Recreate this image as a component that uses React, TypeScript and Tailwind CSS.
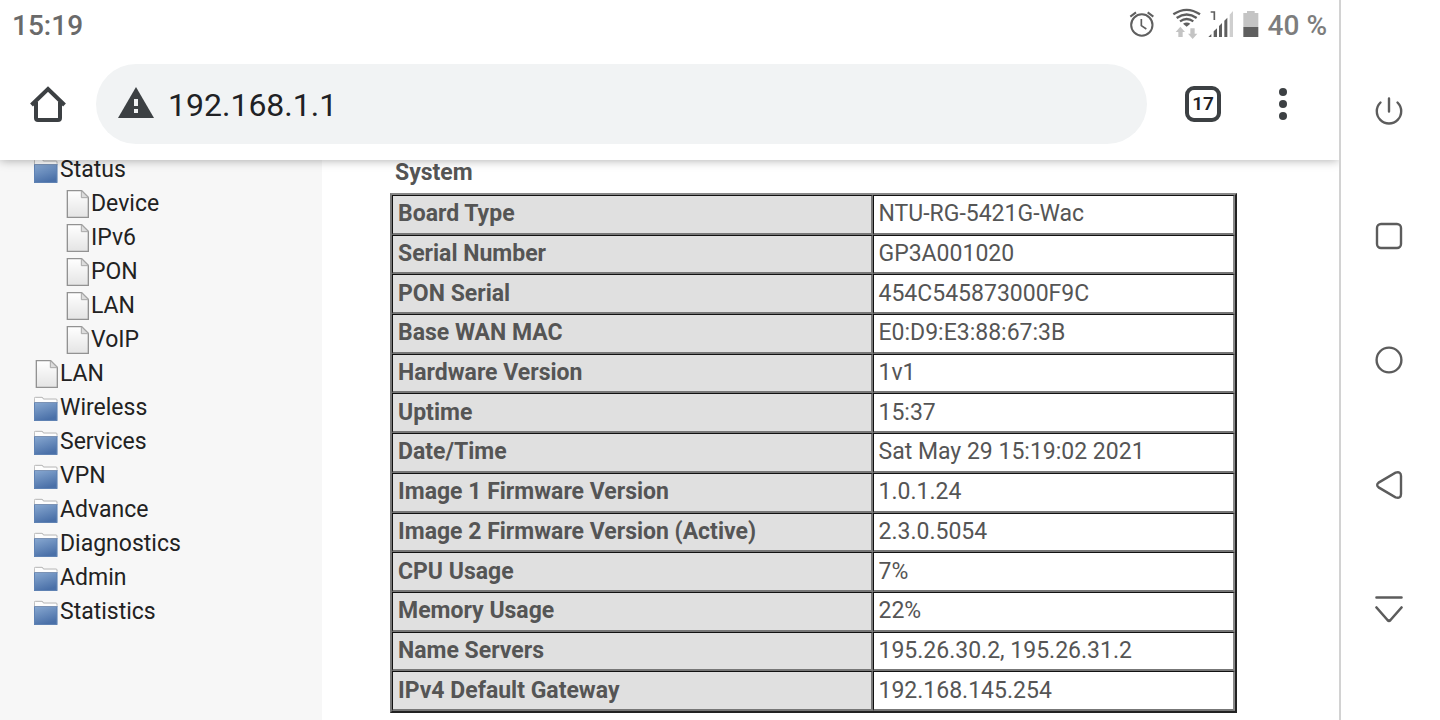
import {ReactNode} from 'react';

interface MenuItem {
    label: string;
    icon: "folder" | "page";
    children?: MenuItem[];
}

interface IconButtonProps {
    label: string;
    className?: string;
    children: ReactNode;
}

const menu: MenuItem[] = [
    {
        label: "Status",
        icon: "folder",
        children: [
            {label: "Device", icon: "page"},
            {label: "IPv6", icon: "page"},
            {label: "PON", icon: "page"},
            {label: "LAN", icon: "page"},
            {label: "VoIP", icon: "page"},
        ],
    },
    {label: "LAN", icon: "page"},
    {label: "Wireless", icon: "folder"},
    {label: "Services", icon: "folder"},
    {label: "VPN", icon: "folder"},
    {label: "Advance", icon: "folder"},
    {label: "Diagnostics", icon: "folder"},
    {label: "Admin", icon: "folder"},
    {label: "Statistics", icon: "folder"},
];

const systemInfo = [
    ["Board Type", "NTU-RG-5421G-Wac"],
    ["Serial Number", "GP3A001020"],
    ["PON Serial", "454C545873000F9C"],
    ["Base WAN MAC", "E0:D9:E3:88:67:3B"],
    ["Hardware Version", "1v1"],
    ["Uptime", "15:37"],
    ["Date/Time", "Sat May 29 15:19:02 2021"],
    ["Image 1 Firmware Version", "1.0.1.24"],
    ["Image 2 Firmware Version (Active)", "2.3.0.5054"],
    ["CPU Usage", "7%"],
    ["Memory Usage", "22%"],
    ["Name Servers", "195.26.30.2, 195.26.31.2"],
    ["IPv4 Default Gateway", "192.168.145.254"],
];

const FolderIcon = () => (
    <svg className="h-7 w-6 shrink-0" viewBox="42 222 72 84" aria-hidden="true">
        <defs>
            <linearGradient id="folder" x1="0" y1="0" x2="0.4" y2="1">
                <stop offset="0" stopColor="#8aaad2"/>
                <stop offset="1" stopColor="#4a70a8"/>
            </linearGradient>
        </defs>
        <path d="M43 248V235q0-3 3-3h20q3 0 4 4h38q3 0 3 3v9z" fill="#fdfdfd"/>
        <path d="M43 247V235q0-3 3-3h20q3 0 4 5h38q3 0 3 3v5" fill="none" stroke="#b4b4b4" strokeWidth="3"/>
        <rect x="42" y="246" width="70" height="57" fill="url(#folder)"/>
        <path d="M43.500 246v55.500h67V246" fill="none" stroke="#5f82b3" strokeWidth="3"/>
        <path d="M42 247.500h70" stroke="#7b92b4" strokeWidth="3"/>
    </svg>
);

const PageIcon = () => (
    <svg className="h-7 w-6 shrink-0" viewBox="41 118 72 84" aria-hidden="true">
        <defs>
            <linearGradient id="page" x1="0" y1="0" x2="0" y2="1">
                <stop offset="0" stopColor="#ffffff"/>
                <stop offset="1" stopColor="#e4e4e4"/>
            </linearGradient>
        </defs>
        <path d="M48 120h43l20 20v60H48z" fill="url(#page)" stroke="#929292" strokeWidth="4"/>
        <path d="M90 120v21h21z" fill="#dcdcdc" stroke="#a8a8a8" strokeWidth="3"/>
    </svg>
);

const AlarmIcon = () => (
    <svg className="h-8 w-[26px]" viewBox="56 24 78 96" fill="none" stroke="#5f5f5f" aria-hidden="true">
        <circle cx="94.500" cy="75" r="32" strokeWidth="6"/>
        <path d="M93 57v20l15 10" strokeWidth="5"/>
        <path d="M60 50l17-13M112 37l17 13" strokeWidth="6"/>
    </svg>
);

const WifiIcon = () => (
    <svg className="h-8 w-[29px]" viewBox="183 24 87 96" aria-hidden="true">
        <g fill="none" stroke="#5f5f5f" strokeWidth="7">
            <path d="M187 43q40-27 80 0"/>
            <path d="M197 54q30-21 60 0"/>
            <path d="M207 64q20-14 40 0"/>
        </g>
        <path d="M216 71q11-7 22 0l-11 9z" fill="#5f5f5f"/>
        <path d="M208 80l14 16h-7v15h-13V96h-8zM245 117l-14-16h7V85h13v16h8z" fill="#c4c4c4"/>
    </svg>
);

const SignalIcon = () => (
    <svg className="h-8 w-[26px]" viewBox="291 24 78 96" aria-hidden="true">
        <path d="M299 36h11v24" fill="none" stroke="#5f5f5f" strokeWidth="5"/>
        <path d="M292 111l9-9v9zM308 111V94l10-9v26zM324 111V78l9-9v42zM340 111V62l9-9v58z" fill="#5f5f5f"/>
        <path d="M356 111V44l10-11v78z" fill="#cfcfcf"/>
    </svg>
);

const BatteryIcon = () => (
    <svg className="h-8 w-4" viewBox="398 24 48 96" aria-hidden="true">
        <path d="M410 33h23v6h11v42h-45V39h11z" fill="#c4c4c4"/>
        <path d="M399 81h45v30h-45z" fill="#5f5f5f"/>
    </svg>
);

const HomeIcon = () => (
    <svg className="size-9" viewBox="0 0 36 36" fill="none" stroke="#3c4043" strokeWidth="4" aria-hidden="true">
        <path d="M1.500 19L18 3l16.500 16" strokeLinejoin="miter"/>
        <path d="M6 16v16q0 2 2 2h20q2 0 2-2V16"/>
    </svg>
);

const IconButton = ({label, className = "", children}: IconButtonProps) => (
    <button type="button" aria-label={label} className={`flex shrink-0 items-center justify-center ${className}`}>
        {children}
    </button>
);

const StatusBar = () => (
    <div className="flex h-12 items-center justify-between px-3 text-[28px] leading-8 font-medium text-[#6a6a6a]">
        <time className="pt-1">15:19</time>
        <div className="flex items-center">
            <AlarmIcon/>
            <span className="ml-[17px]"><WifiIcon/></span>
            <span className="ml-[7px]"><SignalIcon/></span>
            <span className="ml-[9px]"><BatteryIcon/></span>
            <span className="ml-[9px] pt-1 text-[#7d7d7d]">40 %</span>
        </div>
    </div>
);

const Toolbar = () => (
    <div className="flex items-center py-4 pr-[52px] pl-[30px]">
        <IconButton label="Home"><HomeIcon/></IconButton>
        <label className="ml-[30px] flex h-20 flex-1 items-center rounded-full bg-[#f1f3f4] pr-10 pl-[21px]">
            <svg className="h-9 w-[38px] shrink-0" viewBox="0 0 38 36" aria-hidden="true">
                <path d="M19 1l18 31H1z" fill="#3c4043"/>
                <path d="M17 13h4v7h-4zM17 23h4v4h-4z" fill="#f1f3f4"/>
            </svg>
            <input
                type="text"
                aria-label="Address"
                defaultValue="192.168.1.1"
                className="ml-[13px] w-full min-w-0 bg-transparent pt-0.5 text-[32px] leading-10 text-[#202124] outline-none"
            />
        </label>
        <IconButton
            label="Open tabs"
            className="ml-[38px] size-9 rounded-[9px] border-4 border-[#3c4043] text-[19px] font-semibold text-[#202124]"
        >
            17
        </IconButton>
        <IconButton label="More" className="ml-[58px] flex-col gap-1">
            <span className="size-2 rounded-full bg-[#3c4043]"/>
            <span className="size-2 rounded-full bg-[#3c4043]"/>
            <span className="size-2 rounded-full bg-[#3c4043]"/>
        </IconButton>
    </div>
);

const MenuLink = ({item, nested}: { item: MenuItem; nested?: boolean }) => (
    <li>
        <a href="#" className={`flex h-[34px] items-center gap-0.5 ${nested ? "pl-[65px]" : "pl-[34px]"}`}>
            {item.icon === "folder" ? <FolderIcon/> : <PageIcon/>}
            {item.label}
        </a>
        {item.children && (
            <ul>
                {item.children.map((child) => <MenuLink key={child.label} item={child} nested/>)}
            </ul>
        )}
    </li>
);

const SystemTable = () => (
    <section className="min-w-0 flex-1 pr-[102px] pl-[68px] text-[#555]">
        <h2 className="pl-[5px] text-[23px] leading-[26px] font-bold">System</h2>
        <table className="mt-[7px] h-[520px] w-full border-separate border-spacing-0 border-2 border-t-[#888] border-r-[#222] border-b-[#222] border-l-[#777] text-left text-[23px] leading-7">
            <tbody>
                {systemInfo.map(([name, value]) => (
                    <tr key={name}>
                        <th
                            scope="row"
                            className="w-[57%] border border-r-2 border-b-2 border-t-[#111] border-r-[#777] border-b-[#777] border-l-[#111] bg-[#e0e0e0] px-[5px] font-bold"
                        >
                            {name}
                        </th>
                        <td className="border border-r-2 border-b-2 border-t-[#111] border-r-[#888] border-b-[#777] border-l-[#111] bg-white px-[5px]">
                            {value}
                        </td>
                    </tr>
                ))}
            </tbody>
        </table>
    </section>
);

const SystemNav = () => (
    <nav className="flex w-[101px] shrink-0 flex-col items-center justify-between border-l-2 border-[#d2d2d2] bg-white py-[97px] pr-[3px]">
        <IconButton label="Power">
            <svg className="size-7" viewBox="0 0 28 28" fill="none" stroke="#5c5c5c" strokeWidth="2.400" strokeLinecap="round">
                <path d="M14 1.500v13M5.500 5.500a12.200 12.200 0 1 0 17 0"/>
            </svg>
        </IconButton>
        <IconButton label="Recent apps">
            <svg className="size-7" viewBox="0 0 28 28" fill="none" stroke="#5c5c5c" strokeWidth="2.400">
                <rect x="2" y="2" width="24" height="24" rx="4"/>
            </svg>
        </IconButton>
        <IconButton label="Home screen">
            <svg className="size-7" viewBox="0 0 28 28" fill="none" stroke="#5c5c5c" strokeWidth="2.400">
                <circle cx="14" cy="14" r="12.400"/>
            </svg>
        </IconButton>
        <IconButton label="Back">
            <svg className="size-7" viewBox="0 0 28 28" fill="none" stroke="#5c5c5c" strokeWidth="2.400">
                <path d="M3.600 11.600L20.500 1.700Q26 0 26 5v18q0 5-5.500 3.300L3.600 16.400Q.800 14 3.600 11.600z"/>
            </svg>
        </IconButton>
        <IconButton label="Hide bar">
            <svg className="size-7" viewBox="0 0 28 28" fill="none" stroke="#5c5c5c" strokeWidth="2.600" strokeLinecap="round" strokeLinejoin="round">
                <path d="M1.500 2.500h25M1.500 12.500l11 12.500q1.500 1.500 3 0l11-12.500"/>
            </svg>
        </IconButton>
    </nav>
);

export default function App() {
    return (
        <div className="flex h-screen overflow-hidden bg-white font-[Roboto,'Liberation_Sans',sans-serif]">
            <div className="flex min-w-0 flex-1 flex-col overflow-hidden">
                <header className="relative z-10 bg-white shadow-[0_0_10px_rgba(0,0,0,0.35)]">
                    <StatusBar/>
                    <Toolbar/>
                </header>
                <main className="flex min-h-0 flex-1">
                    <aside className="w-[322px] shrink-0 bg-[#f7f7f7] text-[23px] leading-7 text-[#222]">
                        <ul className="-mt-[7px]">
                            {menu.map((item) => <MenuLink key={item.label} item={item}/>)}
                        </ul>
                    </aside>
                    <SystemTable/>
                </main>
            </div>
            <SystemNav/>
        </div>
    );
}
